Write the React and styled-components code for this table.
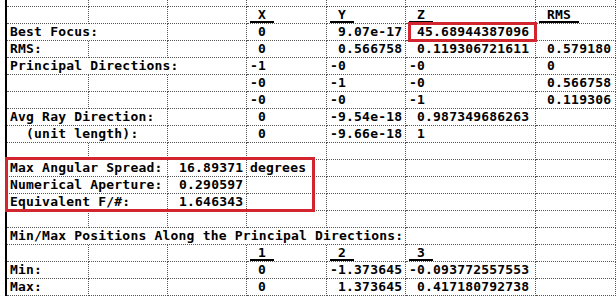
import React from 'react';
import styled, { createGlobalStyle } from 'styled-components';

const GlobalStyle = createGlobalStyle`
  html, body {
    margin: 0;
    padding: 0;
    background: #ffffff;
    overflow: hidden;
  }
`;

const COLUMNS = [82, 79, 79, 80, 79, 130, 80];

const Page = styled.div`
  position: relative;
  width: 616px;
  height: 301px;
  padding-left: 5px;
  box-sizing: border-box;
`;

const Sheet = styled.div`
  display: grid;
  grid-template-columns: ${COLUMNS.map((w) => `${w}px`).join(' ')};
  grid-template-rows: 7px;
  grid-auto-rows: 17px;
  width: max-content;
  border-left: 2px solid #000;
  font-family: 'DejaVu Sans Mono', 'Liberation Mono', monospace;
  font-weight: bold;
  font-size: 13px;
  letter-spacing: 0.2px;
  color: #000;
`;

const Cell = styled.div`
  grid-column: span ${(p) => p.span || 1};
  box-sizing: border-box;
  border-right: 1px dotted #555;
  border-bottom: 1px dotted #555;
  padding-left: 3px;
  line-height: 16px;
  white-space: pre;
`;

const Head = styled.span`
  display: inline-block;
  line-height: 13px;
  border-bottom: 2px solid #000;
`;

const Highlight = styled.div`
  position: absolute;
  box-sizing: border-box;
  border: 3px solid #d3252d;
  pointer-events: none;
`;

const rows = [
  [{ t: '' }, { t: '' }, { t: '' }, { h: ' X ' }, { h: ' Y ' }, { h: ' Z ' }, { h: ' RMS ' }],
  [{ t: 'Best Focus:', span: 2 }, { t: '' }, { t: ' 0' }, { t: ' 9.07e-17' }, { t: ' 45.68944387096' }, { t: '' }],
  [{ t: 'RMS:' }, { t: '' }, { t: '' }, { t: ' 0' }, { t: ' 0.566758' }, { t: ' 0.119306721611' }, { t: ' 0.579180' }],
  [{ t: 'Principal Directions:', span: 3 }, { t: '-1' }, { t: '-0' }, { t: '-0' }, { t: ' 0' }],
  [{ t: '' }, { t: '' }, { t: '' }, { t: '-0' }, { t: '-1' }, { t: '-0' }, { t: ' 0.566758' }],
  [{ t: '' }, { t: '' }, { t: '' }, { t: '-0' }, { t: '-0' }, { t: '-1' }, { t: ' 0.119306' }],
  [{ t: 'Avg Ray Direction:', span: 2 }, { t: '' }, { t: ' 0' }, { t: '-9.54e-18' }, { t: ' 0.987349686263' }, { t: '' }],
  [{ t: '  (unit length):', span: 2 }, { t: '' }, { t: ' 0' }, { t: '-9.66e-18' }, { t: ' 1' }, { t: '' }],
  [{ t: '' }, { t: '' }, { t: '' }, { t: '' }, { t: '' }, { t: '' }, { t: '' }],
  [{ t: 'Max Angular Spread:', span: 2 }, { t: ' 16.89371' }, { t: 'degrees' }, { t: '' }, { t: '' }, { t: '' }],
  [{ t: 'Numerical Aperture:', span: 2 }, { t: ' 0.290597' }, { t: '' }, { t: '' }, { t: '' }, { t: '' }],
  [{ t: 'Equivalent F/#:', span: 2 }, { t: ' 1.646343' }, { t: '' }, { t: '' }, { t: '' }, { t: '' }],
  [{ t: '' }, { t: '' }, { t: '' }, { t: '' }, { t: '' }, { t: '' }, { t: '' }],
  [{ t: 'Min/Max Positions Along the Principal Directions:', span: 5 }, { t: '' }, { t: '' }],
  [{ t: '' }, { t: '' }, { t: '' }, { h: ' 1 ' }, { h: ' 2 ' }, { h: ' 3 ' }, { t: '' }],
  [{ t: 'Min:' }, { t: '' }, { t: '' }, { t: ' 0' }, { t: '-1.373645' }, { t: '-0.093772557553' }, { t: '' }],
  [{ t: 'Max:' }, { t: '' }, { t: '' }, { t: ' 0' }, { t: ' 1.373645' }, { t: ' 0.417180792738' }, { t: '' }],
];

const App = () => (
  <>
    <GlobalStyle />
    <Page>
      <Sheet>
        {COLUMNS.map((w, i) => (
          <Cell key={`stub-${i}`} />
        ))}
        {rows.map((row, r) =>
          row.map((c, i) => (
            <Cell key={`${r}-${i}`} span={c.span}>
              {c.h ? <Head>{c.h}</Head> : c.t}
            </Cell>
          ))
        )}
      </Sheet>
      <Highlight style={{ left: 408, top: 22, width: 129, height: 20 }} />
      <Highlight style={{ left: 5, top: 157, width: 310, height: 55 }} />
    </Page>
  </>
);

export default App;
